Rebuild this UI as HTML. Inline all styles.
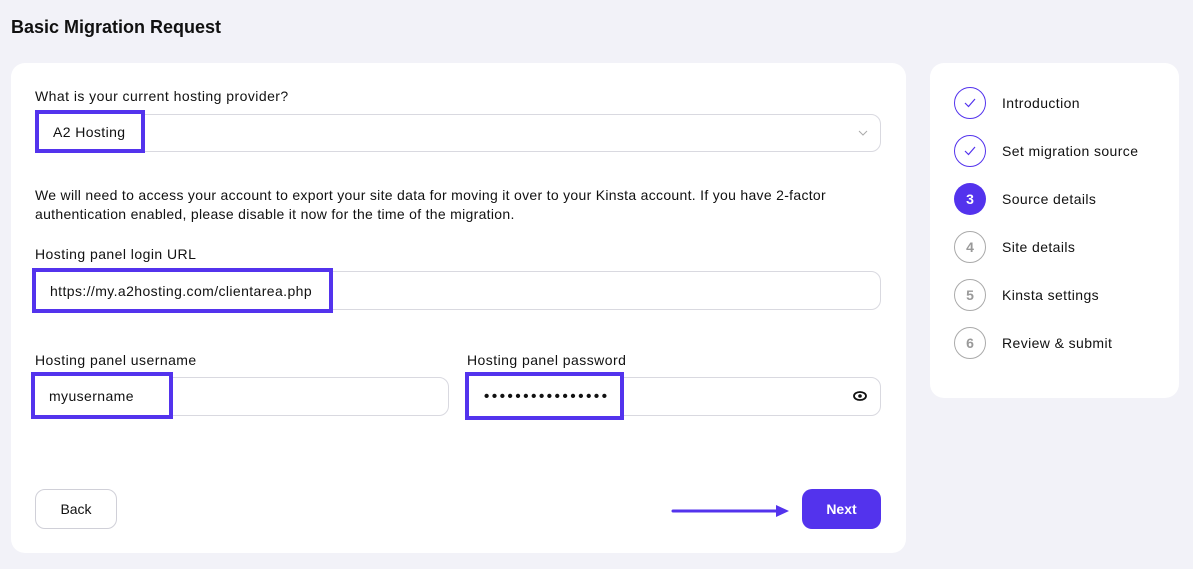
<!DOCTYPE html><html><head><style>
body{margin:0;width:1193px;height:569px;background:#f2f2f8;font-family:"Liberation Sans",sans-serif;position:relative;overflow:hidden;color:#111}
.a{position:absolute}
h1{position:absolute;left:11px;top:17px;margin:0;font-size:18px;font-weight:bold;color:#111}
.card{position:absolute;background:#fff;border-radius:14px}
.lbl{position:absolute;font-size:14px;color:#111;letter-spacing:0.45px}
.in{position:absolute;border:1px solid #d9d9e0;border-radius:10px;background:#fff;box-sizing:border-box}
.hl{position:absolute;border:4px solid #5333ed;box-sizing:border-box;background:#fff;font-size:14px;color:#111;display:flex;align-items:center;padding-left:14px;letter-spacing:0.4px}
.c{position:absolute;left:954px;width:32px;height:32px;border-radius:50%;box-sizing:border-box;display:flex;align-items:center;justify-content:center;font-size:14px;font-weight:bold}
.st{position:absolute;left:1002px;font-size:14px;color:#111;letter-spacing:0.4px}
.btn{position:absolute;border-radius:10px;box-sizing:border-box;display:flex;align-items:center;justify-content:center;font-size:14px}
</style></head><body>
<h1>Basic Migration Request</h1>
<div class="card" style="left:11px;top:63px;width:895px;height:490px"></div>
<div class="card" style="left:930px;top:63px;width:249px;height:335px"></div>
<div class="lbl" style="left:35px;top:88px">What is your current hosting provider?</div>
<div class="in" style="left:35px;top:114px;width:846px;height:38px"></div>
<svg class="a" style="left:857px;top:128px" width="12" height="10"><path d="M2 3l4 4 4-4" fill="none" stroke="#aaa" stroke-width="1"/></svg>
<div class="hl" style="left:35px;top:110px;width:110px;height:43px">A2 Hosting</div>
<div class="lbl" style="left:35px;top:186px;line-height:19px;letter-spacing:0.3px">We will need to access your account to export your site data for moving it over to your Kinsta account. If you have 2-factor<br>authentication enabled, please disable it now for the time of the migration.</div>
<div class="lbl" style="left:35px;top:246px">Hosting panel login URL</div>
<div class="in" style="left:35px;top:271px;width:846px;height:39px"></div>
<div class="hl" style="left:32px;top:268px;width:301px;height:45px">https://my.a2hosting.com/clientarea.php</div>
<div class="lbl" style="left:35px;top:352px">Hosting panel username</div>
<div class="lbl" style="left:467px;top:352px">Hosting panel password</div>
<div class="in" style="left:35px;top:377px;width:414px;height:39px"></div>
<div class="in" style="left:467px;top:377px;width:414px;height:39px"></div>
<div class="hl" style="left:31px;top:372px;width:142px;height:47px">myusername</div>
<div class="hl" style="left:465px;top:372px;width:159px;height:48px;font-size:15px;letter-spacing:2.6px;font-weight:bold;padding-left:15px">••••••••••••••••</div>
<svg class="a" style="left:853px;top:390px" width="14" height="12"><ellipse cx="7" cy="6" rx="6" ry="4" fill="none" stroke="#111" stroke-width="1.8"/><circle cx="7" cy="6" r="1.8" fill="#111"/></svg>
<div class="btn" style="left:35px;top:489px;width:82px;height:40px;border:1px solid #d0d0d8;background:#fff">Back</div>
<div class="btn" style="left:802px;top:489px;width:79px;height:40px;background:#5333ed;color:#fff;font-weight:bold">Next</div>
<svg class="a" style="left:670px;top:503px" width="125" height="16"><line x1="3" y1="8" x2="112" y2="8" stroke="#5333ed" stroke-width="3" stroke-linecap="round"/><path d="M106 2l13 6-13 6z" fill="#5333ed"/></svg>
<div class="c" style="top:87px;border:1px solid #5333ed"><svg width="14" height="12"><path d="M2 6l3.5 3.5L12 2" fill="none" stroke="#5333ed" stroke-width="1.2"/></svg></div>
<div class="c" style="top:135px;border:1px solid #5333ed"><svg width="14" height="12"><path d="M2 6l3.5 3.5L12 2" fill="none" stroke="#5333ed" stroke-width="1.2"/></svg></div>
<div class="c" style="top:183px;background:#5333ed;color:#fff">3</div>
<div class="c" style="top:231px;border:1px solid #aaa;color:#999">4</div>
<div class="c" style="top:279px;border:1px solid #aaa;color:#999">5</div>
<div class="c" style="top:327px;border:1px solid #aaa;color:#999">6</div>
<div class="st" style="top:95px">Introduction</div>
<div class="st" style="top:143px">Set migration source</div>
<div class="st" style="top:191px">Source details</div>
<div class="st" style="top:239px">Site details</div>
<div class="st" style="top:287px">Kinsta settings</div>
<div class="st" style="top:335px">Review &amp; submit</div>
</body></html>
